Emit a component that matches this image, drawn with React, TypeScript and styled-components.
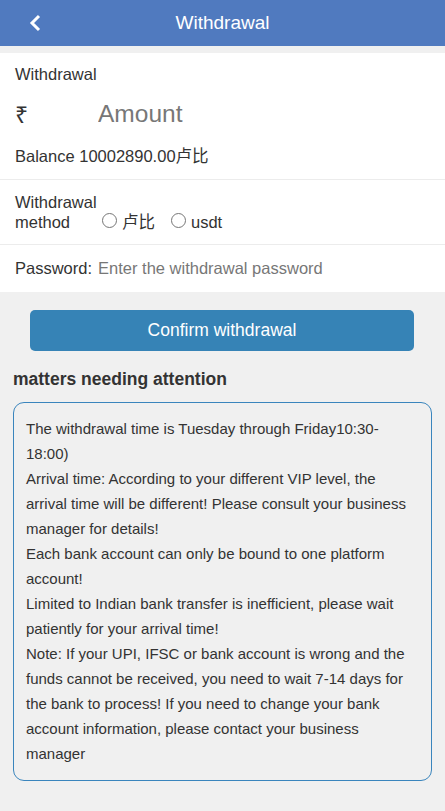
import { FC } from 'react';
import styled, { createGlobalStyle } from 'styled-components';

const GlobalStyle = createGlobalStyle`
  html, body {
    margin: 0;
    padding: 0;
    background: #f0f0f0;
    font-family: "Liberation Sans", Arial, "Noto Sans CJK SC", sans-serif;
    color: #333;
  }
`;

const Page = styled.div`
  width: 445px;
  min-height: 811px;
  background: #f0f0f0;
`;

const Header = styled.header`
  height: 46px;
  background: #507abf;
  color: #fff;
  display: flex;
  align-items: center;
  justify-content: center;
  position: relative;
  font-size: 19px;
`;

const Back = styled.span`
  position: absolute;
  left: 27px;
  top: 13px;
  display: flex;
`;

const Panel = styled.div`
  margin-top: 7px;
  background: #fff;
`;

const Row = styled.div<{ $border?: boolean }>`
  padding: 0 15px;
  border-bottom: ${(p) => (p.$border ? '1px solid #ececec' : 'none')};
`;

const Label = styled.div`
  font-size: 16.5px;
  padding-top: 12px;
  line-height: 18px;
`;

const AmountLine = styled.div`
  display: flex;
  align-items: center;
  height: 44px;
  margin-top: 9px;
`;

const Rupee = styled.span`
  font-size: 23px;
  width: 83px;
`;

const AmountInput = styled.input`
  border: none;
  outline: none;
  font-size: 24.5px;
  font-family: inherit;
  padding: 0;
  color: #333;
  &::placeholder {
    color: #777;
  }
`;

const Balance = styled.div`
  font-size: 16.5px;
  line-height: 18px;
  padding: 11px 0 14px;
`;

const MethodRow = styled(Row)`
  display: flex;
  align-items: flex-end;
  height: 65px;
  padding-bottom: 12px;
  box-sizing: border-box;
`;

const MethodLabel = styled.div`
  font-size: 16.5px;
  line-height: 20px;
  width: 87px;
`;

const Option = styled.label`
  display: flex;
  align-items: center;
  font-size: 16.5px;
  margin-right: 16px;
  line-height: 20px;
`;

const Radio = styled.span`
  width: 13px;
  height: 13px;
  border: 1px solid #767676;
  border-radius: 50%;
  margin-right: 5px;
  margin-top: -4px;
`;

const PasswordRow = styled(Row)`
  display: flex;
  align-items: center;
  height: 47px;
  font-size: 16.5px;
`;

const PwInput = styled.input`
  border: none;
  outline: none;
  font-size: 16.5px;
  font-family: inherit;
  padding: 0;
  margin-left: 6px;
  flex: 1;
  &::placeholder {
    color: #777;
  }
`;

const Button = styled.button`
  display: block;
  margin: 18px auto 0 30px;
  width: 384px;
  height: 41px;
  border: none;
  border-radius: 5px;
  background: #3683b6;
  color: #fff;
  font-size: 17.5px;
  font-family: inherit;
`;

const Title = styled.h3`
  margin: 18px 13px 0;
  font-size: 17.5px;
  line-height: 20px;
  font-weight: bold;
  color: #333;
`;

const Notice = styled.div`
  margin: 13px 13px 0;
  border: 1px solid #3a85bd;
  border-radius: 11px;
  padding: 13px 12px 14px 12px;
  font-size: 15px;
  line-height: 25px;
  color: #333;
  p {
    margin: 0;
  }
`;

const notes = [
  'The withdrawal time is Tuesday through Friday10:30-18:00)',
  'Arrival time: According to your different VIP level, the arrival time will be different! Please consult your business manager for details!',
  'Each bank account can only be bound to one platform account!',
  'Limited to Indian bank transfer is inefficient, please wait patiently for your arrival time!',
  'Note: If your UPI, IFSC or bank account is wrong and the funds cannot be received, you need to wait 7-14 days for the bank to process! If you need to change your bank account information, please contact your business manager',
];

const App: FC = () => (
  <Page>
    <GlobalStyle />
    <Header>
      <Back>
        <svg width="16" height="20" viewBox="0 0 16 20">
          <path d="M12 3 L5 10 L12 17" fill="none" stroke="#fff" strokeWidth="3" />
        </svg>
      </Back>
      Withdrawal
    </Header>
    <Panel>
      <Row $border>
        <Label>Withdrawal</Label>
        <AmountLine>
          <Rupee>₹</Rupee>
          <AmountInput placeholder="Amount" />
        </AmountLine>
        <Balance>Balance 10002890.00卢比</Balance>
      </Row>
      <MethodRow $border>
        <MethodLabel>
          Withdrawal
          <br />
          method
        </MethodLabel>
        <Option>
          <Radio />
          卢比
        </Option>
        <Option>
          <Radio />
          usdt
        </Option>
      </MethodRow>
      <PasswordRow>
        Password:
        <PwInput placeholder="Enter the withdrawal password" type="password" />
      </PasswordRow>
    </Panel>
    <Button>Confirm withdrawal</Button>
    <Title>matters needing attention</Title>
    <Notice>
      {notes.map((n) => (
        <p key={n}>{n}</p>
      ))}
    </Notice>
  </Page>
);

export default App;
